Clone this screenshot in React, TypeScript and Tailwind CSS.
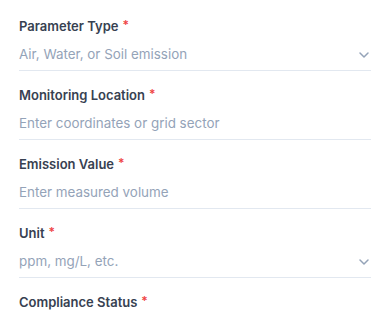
import React from "react";
import { ChevronDown } from "lucide-react";

type Field = { label: string; placeholder?: string; select?: boolean };

const fields: Field[] = [
  { label: "Parameter Type", placeholder: "Air, Water, or Soil emission", select: true },
  { label: "Monitoring Location", placeholder: "Enter coordinates or grid sector" },
  { label: "Emission Value", placeholder: "Enter measured volume" },
  { label: "Unit", placeholder: "ppm, mg/L, etc.", select: true },
  { label: "Compliance Status", placeholder: "Select status", select: true },
];

export default function App() {
  return (
    <div
      className="w-[390px] h-[316px] overflow-hidden bg-white px-[19px] pt-[17px]"
      style={{ fontFamily: "Inter, 'Noto Sans', sans-serif" }}
    >
      <div className="flex flex-col gap-[15px]">
        {fields.map((f) => (
          <div key={f.label} className="flex flex-col">
            <label className="h-5 flex items-center text-[13px] font-semibold text-[#374151]">
              {f.label}
              <span className="ml-[4px] text-[#ef4444] text-[12px] relative -top-[2px]">*</span>
            </label>
            <div className="mt-[2px] h-[32px] flex items-center justify-between border-b border-[#e2e8f0]">
              <span className="text-[13.4px] text-[#94a3b8]">{f.placeholder}</span>
              {f.select && (
                <ChevronDown className="w-4 h-4 text-[#94a3b8] mr-[-1px]" strokeWidth={2.25} />
              )}
            </div>
          </div>
        ))}
      </div>
    </div>
  );
}
